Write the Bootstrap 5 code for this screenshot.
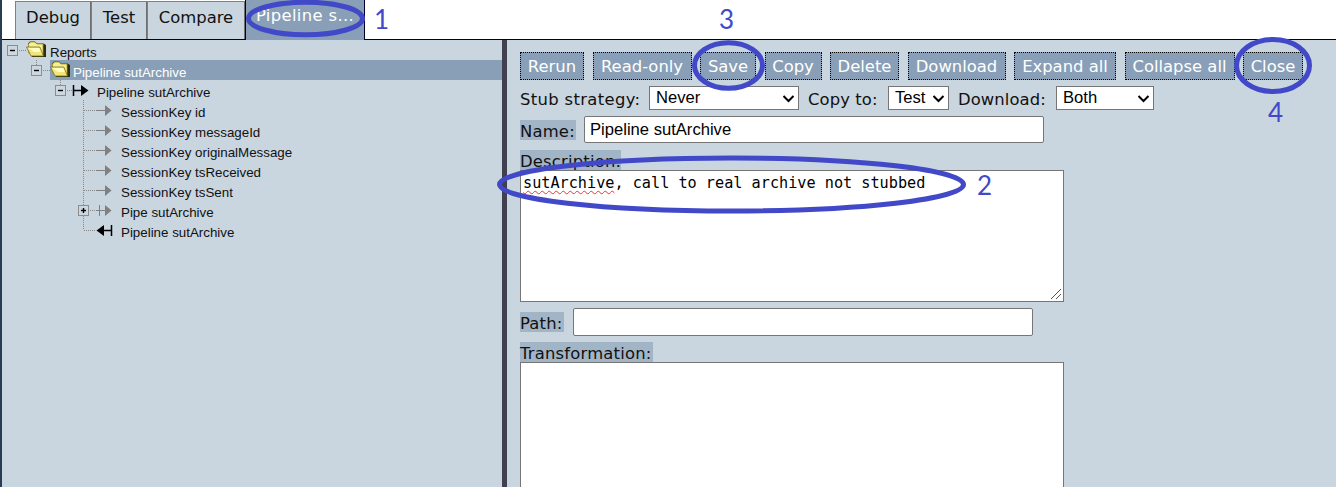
<!DOCTYPE html>
<html lang="en">
<head>
<meta charset="utf-8">
<meta name="viewport" content="width=device-width, initial-scale=1">
<title>Pipeline sutArchive</title>
<link href="https://cdn.jsdelivr.net/npm/bootstrap@5.3.0/dist/css/bootstrap.min.css" rel="stylesheet">
<style>
:root{--pane:#c9d5df;--accent:#889fb7;--navy:#000033}
body{font-family:"DejaVu Sans",sans-serif;font-size:16.4px;line-height:20px;color:#111;height:487px;overflow:hidden}
.edge{width:2px;background:#293c51}
.tabbar{height:40px;padding-left:13px;border-bottom:1px solid var(--navy)}
.tab{height:38px;margin-top:1px;background:var(--pane);border:1px solid #808080;border-width:1px 1px 0 1px;border-right-color:#707070;line-height:32px;text-align:center;color:#111;padding:0;white-space:nowrap}
.tab-on{height:40px;margin-top:0;border:0;border-left:1px solid var(--navy);border-right:1px solid var(--navy);background:var(--accent);color:#fff;line-height:31px;text-align:left;padding-left:10px;letter-spacing:.35px}
.workspace{background:var(--pane);height:447px}
.tree{width:500px;font:13.333px/20px "Liberation Sans",sans-serif}
.tree li{height:20px}
.tree svg{display:block;flex:none}
.tree span{padding-top:3px;height:20px;white-space:nowrap}
.picked{background:linear-gradient(to right,transparent 48px,var(--accent) 48px);color:#fff}
.divider{width:5px;background:#423f4f}
.editor{padding:12px 0 0 13px;width:829px}
.tool{height:28px;border:1px dotted #000;border-radius:0;background:var(--accent);color:#fff;padding:0;font-size:16.4px;line-height:28px;text-align:center;white-space:nowrap}
.field{background:#fff;border:1px solid #767676;border-radius:2px;font:16.6px/26px "Liberation Sans",sans-serif;color:#000;padding:0 5px;display:block}
.pick{height:24px;border-radius:0;line-height:22px;padding:0 3px 0 6px;display:flex;justify-content:space-between;align-items:center}
.pick span{display:block;height:22px}
.caption{padding-top:3px;letter-spacing:.1px}
.tag{background:#a2b5c7;height:20px;white-space:nowrap;line-height:23px;display:block;letter-spacing:.2px}
.area{font:15.2px/20px "DejaVu Sans Mono",monospace;padding:2px;width:544px;border-radius:0;resize:none;overflow:hidden;outline:0}
.typo{text-decoration:underline wavy #e33 1px;text-underline-offset:2px;text-decoration-skip-ink:none}
.notes{left:0;top:0;pointer-events:none}
</style>
<script src="https://cdn.jsdelivr.net/npm/bootstrap@5.3.0/dist/js/bootstrap.bundle.min.js"></script>
</head>
<body class="d-flex position-relative bg-white">
<svg width="0" height="0" class="position-absolute">
 <defs>
  <g id="minus"><rect x=".5" y="5.5" width="10" height="10" fill="#ccd7e0" stroke="#8c8c8c"/><path d="M3 10.500h5" stroke="#000" stroke-width="1.400"/></g>
  <g id="plus"><use href="#minus"/><path d="M5.500 8v5" stroke="#000" stroke-width="1.400"/></g>
  <g id="folder"><path d="M2 7V3.500L4 1.500h5l2 2h6.500L20 5v12H6z" fill="#2f2d08"/><path d="M2.500 13V4L4.500 2h4.300l2 2H17v10.500z" fill="#f7f092" stroke="#a19638" stroke-width=".8"/><path d="M.5 7h13.300l3.700 9H5z" fill="#f3e578" stroke="#756d1c" stroke-width=".8"/><path d="M1.800 8h11.400l1.600 4H8z" fill="#fffcc4"/></g>
  <g id="arrow"><path d="M0 10.500h10" stroke="#808080"/><path d="M9 5v11l6.500-5.500z" fill="#808080"/></g>
 </defs>
</svg>
<div class="edge"></div>
<div class="flex-grow-1">
 <nav class="tabbar d-flex">
  <div class="tab" style="width:76px">Debug</div>
  <div class="tab" style="width:56px">Test</div>
  <div class="tab" style="width:98px">Compare</div>
  <div class="tab tab-on" style="width:120px">Pipeline s...</div>
 </nav>
 <main class="workspace d-flex">
  <ul class="tree list-unstyled mb-0">
   <li class="d-flex"><svg width="48" height="20"><use href="#minus" x="5"/><path d="M17 10.500h7" stroke="#888" stroke-dasharray="1 1"/><use href="#folder" x="24"/></svg><span>Reports</span></li>
   <li class="d-flex picked"><svg width="71" height="20"><path d="M34.500 0v5M41 10.500h7" stroke="#888" stroke-dasharray="1 1"/><use href="#minus" x="29"/><use href="#folder" x="48"/></svg><span>Pipeline sutArchive</span></li>
   <li class="d-flex"><svg width="95" height="20"><path d="M58.500 0v5M65 10.500h6" stroke="#888" stroke-dasharray="1 1"/><use href="#minus" x="53"/><path d="M71.500 5v11M71 10.500h10" stroke="#000" stroke-width="1.500"/><path d="M79 5v11l7.500-5.500z"/></svg><span>Pipeline sutArchive</span></li>
   <li class="d-flex"><svg width="119" height="20"><path d="M81.500 0v20M82 10.500h12" stroke="#888" stroke-dasharray="1 1"/><use href="#arrow" x="94"/></svg><span>SessionKey id</span></li>
   <li class="d-flex"><svg width="119" height="20"><path d="M81.500 0v20M82 10.500h12" stroke="#888" stroke-dasharray="1 1"/><use href="#arrow" x="94"/></svg><span>SessionKey messageId</span></li>
   <li class="d-flex"><svg width="119" height="20"><path d="M81.500 0v20M82 10.500h12" stroke="#888" stroke-dasharray="1 1"/><use href="#arrow" x="94"/></svg><span>SessionKey originalMessage</span></li>
   <li class="d-flex"><svg width="119" height="20"><path d="M81.500 0v20M82 10.500h12" stroke="#888" stroke-dasharray="1 1"/><use href="#arrow" x="94"/></svg><span>SessionKey tsReceived</span></li>
   <li class="d-flex"><svg width="119" height="20"><path d="M81.500 0v20M82 10.500h12" stroke="#888" stroke-dasharray="1 1"/><use href="#arrow" x="94"/></svg><span>SessionKey tsSent</span></li>
   <li class="d-flex"><svg width="119" height="20"><path d="M81.500 0v20M88 10.500h7" stroke="#888" stroke-dasharray="1 1"/><use href="#plus" x="76"/><path d="M97.500 5v11" stroke="#808080"/><use href="#arrow" x="94"/></svg><span>Pipe sutArchive</span></li>
   <li class="d-flex"><svg width="119" height="20"><path d="M81.500 0v10M82 10.500h12" stroke="#888" stroke-dasharray="1 1"/><path d="M109.500 5v11M100 10.500h10" stroke="#000" stroke-width="1.500"/><path d="M102 5v11l-7.500-5.500z"/></svg><span>Pipeline sutArchive</span></li>
  </ul>
  <div class="divider"></div>
  <section class="editor">
   <div class="d-flex justify-content-between" style="width:783px">
    <button class="tool" style="width:64px">Rerun</button>
    <button class="tool" style="width:99px">Read-only</button>
    <button class="tool" style="width:56px">Save</button>
    <button class="tool" style="width:57px">Copy</button>
    <button class="tool" style="width:69px">Delete</button>
    <button class="tool" style="width:98px">Download</button>
    <button class="tool" style="width:102px">Expand all</button>
    <button class="tool" style="width:110px">Collapse all</button>
    <button class="tool" style="width:60px">Close</button>
   </div>
   <div class="d-flex align-items-center text-nowrap" style="margin-top:6px">
    <span class="caption" style="width:129px;letter-spacing:.35px">Stub strategy:</span>
    <div class="field pick" style="width:150px"><span>Never</span><svg width="13" height="9"><path d="m1.500 2 5 5 5-5" fill="none" stroke="#000" stroke-width="2"/></svg></div>
    <span class="caption" style="width:89px;padding-left:9px">Copy to:</span>
    <div class="field pick" style="width:61px"><span>Test</span><svg width="13" height="9"><path d="m1.500 2 5 5 5-5" fill="none" stroke="#000" stroke-width="2"/></svg></div>
    <span class="caption" style="width:107px;padding-left:9px">Download:</span>
    <div class="field pick" style="width:98px"><span>Both</span><svg width="13" height="9"><path d="m1.500 2 5 5 5-5" fill="none" stroke="#000" stroke-width="2"/></svg></div>
   </div>
   <div class="d-flex" style="margin-top:6px">
    <span class="tag" style="width:56px;margin:4px 8px 0 0">Name:</span>
    <div class="field" style="width:460px;height:27px">Pipeline sutArchive</div>
   </div>
   <span class="tag" style="width:101px;margin-top:7px">Description:</span>
   <div class="field area position-relative" style="height:132px"><span class="typo">sutArchive</span>, call to real archive not stubbed<svg class="position-absolute bottom-0 end-0" width="13" height="13"><path d="M1 11 11 1M6 11l5-5" stroke="#555"/></svg></div>
   <div class="d-flex" style="margin-top:6px">
    <span class="tag" style="width:44px;margin:4px 9px 0 0">Path:</span>
    <div class="field" style="width:460px;height:28px"></div>
   </div>
   <span class="tag" style="width:133px;margin-top:6px">Transformation:</span>
   <div class="field area" style="height:132px"></div>
  </section>
 </main>
</div>
<svg class="notes position-absolute" width="1336" height="487" font-family="Lato,sans-serif" font-size="26">
 <g fill="none" stroke="#4249c8" stroke-width="5">
  <ellipse cx="305.500" cy="18.500" rx="57" ry="16.300"/>
  <ellipse cx="731.500" cy="184.500" rx="232" ry="26.500"/>
  <ellipse cx="728.500" cy="65.500" rx="34" ry="22.800"/>
  <ellipse cx="1273" cy="65.500" rx="36.500" ry="26"/>
 </g>
 <g fill="#4249c8"><text x="374" y="29">1</text><text x="977" y="195">2</text><text x="719" y="29">3</text><text x="1268" y="122">4</text></g>
</svg>
</body>
</html>
